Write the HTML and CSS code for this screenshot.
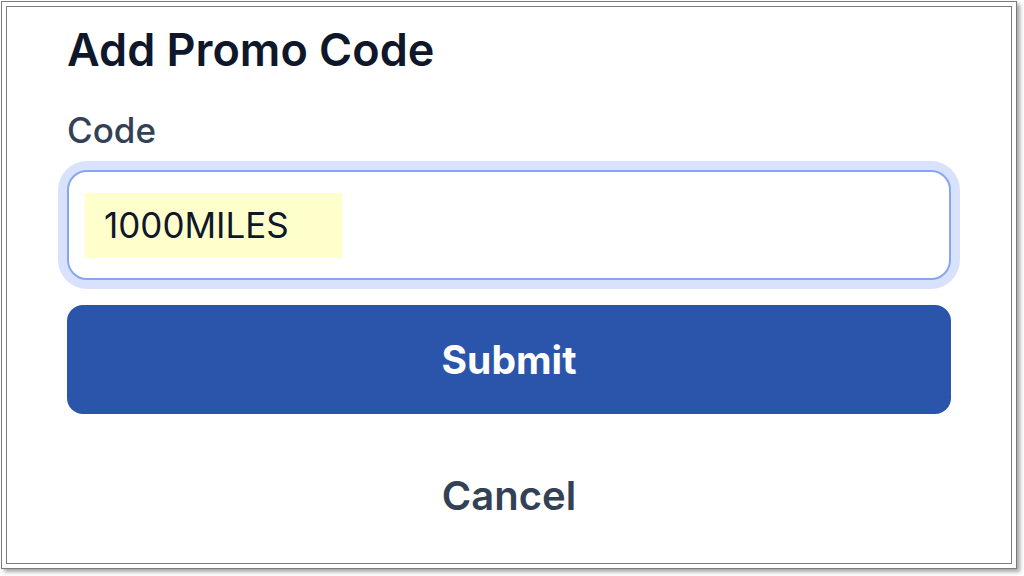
FILE: index.html
```html
<!DOCTYPE html>
<html>
<head>
<meta charset="utf-8">
<link rel="stylesheet" href="styles.css">
</head>
<body>
<div class="frame">
  <div class="panel">
    <h1 class="title">Add Promo Code</h1>
    <label class="label" for="code">Code</label>
    <div class="input" id="code">
      <span class="value">1000MILES</span>
    </div>
    <button class="submit">Submit</button>
    <button class="cancel">Cancel</button>
  </div>
</div>
</body>
</html>
```
FILE: styles.css
```css
html, body {
  margin: 0;
  padding: 0;
  background: #ffffff;
}
body {
  width: 1024px;
  height: 576px;
  overflow: hidden;
  font-family: Inter, "Noto Sans", sans-serif;
}
.frame {
  box-sizing: border-box;
  margin: 1px 0 0 1px;
  width: 1016px;
  height: 568px;
  border: 1px solid #7c7c7c;
  padding: 4px;
  background: #fff;
  box-shadow: 3px 3px 4px rgba(0, 0, 0, 0.35);
  display: flex;
}
.panel {
  flex: 1;
  border: 1px solid #7c7c7c;
  padding: 15px 60px 0 60px;
  display: flex;
  flex-direction: column;
}
.title {
  margin: 0;
  font-size: 45px;
  line-height: 56px;
  font-weight: 600;
  color: #0f172a;
}
.label {
  margin-top: 32px;
  font-size: 35px;
  line-height: 40px;
  font-weight: 500;
  color: #334155;
}
.input {
  box-sizing: border-box;
  margin-top: 20px;
  height: 110px;
  border: 2px solid #86a6f4;
  border-radius: 20px;
  box-shadow: 0 0 0 9px #d9e2fc;
  display: flex;
  align-items: center;
  padding-left: 16px;
  background: #fff;
}
.value {
  box-sizing: border-box;
  width: 257px;
  height: 65px;
  line-height: 65px;
  padding-left: 19px;
  background: #ffffcc;
  font-size: 35px;
  color: #0f172a;
}
.submit {
  margin-top: 25px;
  height: 109px;
  border: none;
  border-radius: 16px;
  background: #2a55aa;
  color: #ffffff;
  font-family: Inter, "Noto Sans", sans-serif;
  font-size: 39px;
  font-weight: 700;
  padding: 0;
}
.cancel {
  margin-top: 59px;
  border: none;
  background: transparent;
  color: #334155;
  font-family: Inter, "Noto Sans", sans-serif;
  font-size: 40px;
  line-height: 46px;
  font-weight: 600;
  padding: 0;
}
```
